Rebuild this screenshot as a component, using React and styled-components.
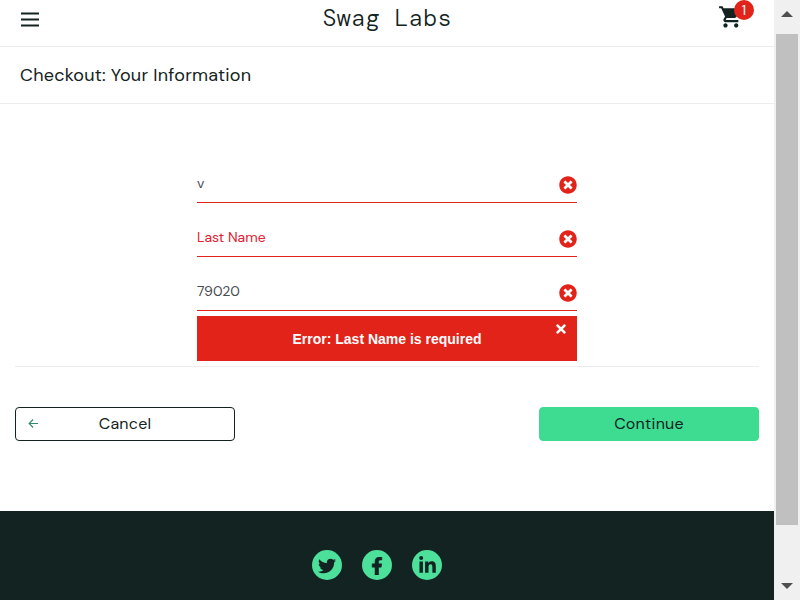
import React from "react";
import styled, { createGlobalStyle } from "styled-components";
import { FaTimesCircle, FaTimes, FaTwitter, FaFacebookF, FaLinkedinIn } from "react-icons/fa";
import { MdShoppingCart } from "react-icons/md";

const ink = "#132322";
const red = "#e2231a";
const sans = '"DM Sans", Inter, "Liberation Sans", sans-serif';

const GlobalStyle = createGlobalStyle`
  * { box-sizing: border-box; }
  body { margin: 0; overflow: hidden; background: #fff; }
`;

const Window = styled.div`
  display: grid;
  grid-template-columns: 774px 26px;
  height: 600px;
  overflow: hidden;
  font-family: ${sans};
  color: ${ink};
`;

const Page = styled.div`
  display: flex;
  flex-direction: column;
  height: 600px;
  overflow: hidden;
`;

const Header = styled.header`
  display: grid;
  grid-template-columns: 100px 1fr 100px;
  height: 47px;
  flex: none;
  border-bottom: 1px solid #ededed;
`;

const MenuIcon = styled.svg`
  display: block;
  width: 20px;
  height: 20px;
  margin: 9px 0 0 20px;
`;

const Logo = styled.div`
  padding-top: 4px;
  text-align: center;
  font: 300 24px/28px "DM Mono", "Liberation Mono", monospace;
  white-space: pre;
`;

const Cart = styled.div`
  position: relative;
  padding: 4px 0 0 44px;
  svg { display: block; }
`;

const Badge = styled.span`
  position: absolute;
  left: 60px;
  top: 0;
  width: 20px;
  height: 20px;
  border-radius: 50%;
  background: ${red};
  color: #fff;
  font-size: 14px;
  line-height: 20px;
  text-align: center;
`;

const TitleBar = styled.div`
  height: 57px;
  flex: none;
  padding-left: 20px;
  border-bottom: 1px solid #ededed;
`;

const Title = styled.h1`
  margin: 0;
  font-size: 18px;
  font-weight: 400;
  line-height: 56px;
  letter-spacing: 0.22px;
`;

const Form = styled.form`
  display: flex;
  flex-direction: column;
  flex: none;
  height: 407px;
  padding: 61px 15px 0;
`;

const Fields = styled.div`
  width: 380px;
  margin: 0 auto;
`;

const Field = styled.div`
  display: flex;
  justify-content: space-between;
  height: 38px;
  margin-bottom: 16px;
  border-bottom: 1px solid ${red};
  color: ${(p) => (p.$empty ? "#e22030" : "#484c55")};
  font-size: 14px;
  font-weight: 400;
  line-height: 37px;
  svg { margin-top: 11px; color: ${red}; }
`;

const ErrorBox = styled.div`
  position: relative;
  height: 45px;
  margin-top: -11px;
  background: ${red};
  color: #fff;
  text-align: center;
  font: bold 14px/46px "Liberation Sans", Arial, sans-serif;
`;

const Dismiss = styled(FaTimes)`
  position: absolute;
  right: 8.6px;
  top: 6px;
`;

const Actions = styled.div`
  display: flex;
  justify-content: space-between;
  margin-top: 5px;
  padding-top: 40px;
  border-top: 1px solid #ededed;
`;

const Button = styled.button`
  display: grid;
  grid-template-columns: 26px 1fr 26px;
  align-items: center;
  width: 220px;
  height: 34px;
  padding: 0 4px;
  border: 1px solid ${(p) => (p.$primary ? "#3ddc91" : ink)};
  border-radius: 4px;
  background: ${(p) => (p.$primary ? "#3ddc91" : "#fff")};
  color: ${ink};
  font: 400 16px/32px ${sans};
  letter-spacing: 0.25px;
  svg { justify-self: center; margin-top: -2px; }
  span { grid-column: 2; }
`;

const Footer = styled.footer`
  display: flex;
  flex: 1;
  gap: 20px;
  padding: 39px 0 0 312px;
  background: ${ink};
`;

const Social = styled.a`
  display: grid;
  place-items: center;
  width: 30px;
  height: 30px;
  border-radius: 50%;
  background: #4de09b;
  color: ${ink};
  svg { margin-top: 1px; }
`;

const Scrollbar = styled.div`
  display: grid;
  grid-template-rows: 34px 491px 1fr;
  padding: 0 2px;
  background: #f0f0f0;
`;

const Thumb = styled.div`
  background: #c0c0c0;
`;

const Arrow = styled.svg`
  display: block;
  width: 12px;
  height: 6px;
  margin: ${(p) => (p.$down ? "58px 0 0 5px" : "11px 0 0 5px")};
  fill: #505050;
`;

export default function App() {
  return (
    <>
      <GlobalStyle />
      <Window>
        <Page>
          <Header>
            <MenuIcon viewBox="0 0 20 20">
              <path d="M1 4.5h18M1 10.5h18M1 16.5h18" stroke={ink} strokeWidth="2.1" />
            </MenuIcon>
            <Logo>Swag Labs</Logo>
            <Cart>
              <MdShoppingCart size={25.7} />
              <Badge>1</Badge>
            </Cart>
          </Header>
          <TitleBar>
            <Title>Checkout: Your Information</Title>
          </TitleBar>
          <Form>
            <Fields>
              <Field>v<FaTimesCircle size={18} /></Field>
              <Field $empty>Last Name<FaTimesCircle size={18} /></Field>
              <Field>79020<FaTimesCircle size={18} /></Field>
              <ErrorBox>
                Error: Last Name is required
                <Dismiss size={14} />
              </ErrorBox>
            </Fields>
            <Actions>
              <Button type="button">
                <svg width="10" height="10" viewBox="0 0 10 10" fill="none" stroke="#2f8a66" strokeWidth="1.1">
                  <path d="M10 5.5H1.3M5.1 1.5l-4 4 4 4" />
                </svg>
                <span>Cancel</span>
              </Button>
              <Button type="button" $primary><span>Continue</span></Button>
            </Actions>
          </Form>
          <Footer>
            <Social><FaTwitter size={18} /></Social>
            <Social><FaFacebookF size={18} stroke={ink} strokeWidth={16} /></Social>
            <Social><FaLinkedinIn size={19} /></Social>
          </Footer>
        </Page>
        <Scrollbar>
          <Arrow viewBox="0 0 12 6"><path d="M0 6L6 0l6 6z" /></Arrow>
          <Thumb />
          <Arrow $down viewBox="0 0 12 6"><path d="M0 0l6 6 6-6z" /></Arrow>
        </Scrollbar>
      </Window>
    </>
  );
}
